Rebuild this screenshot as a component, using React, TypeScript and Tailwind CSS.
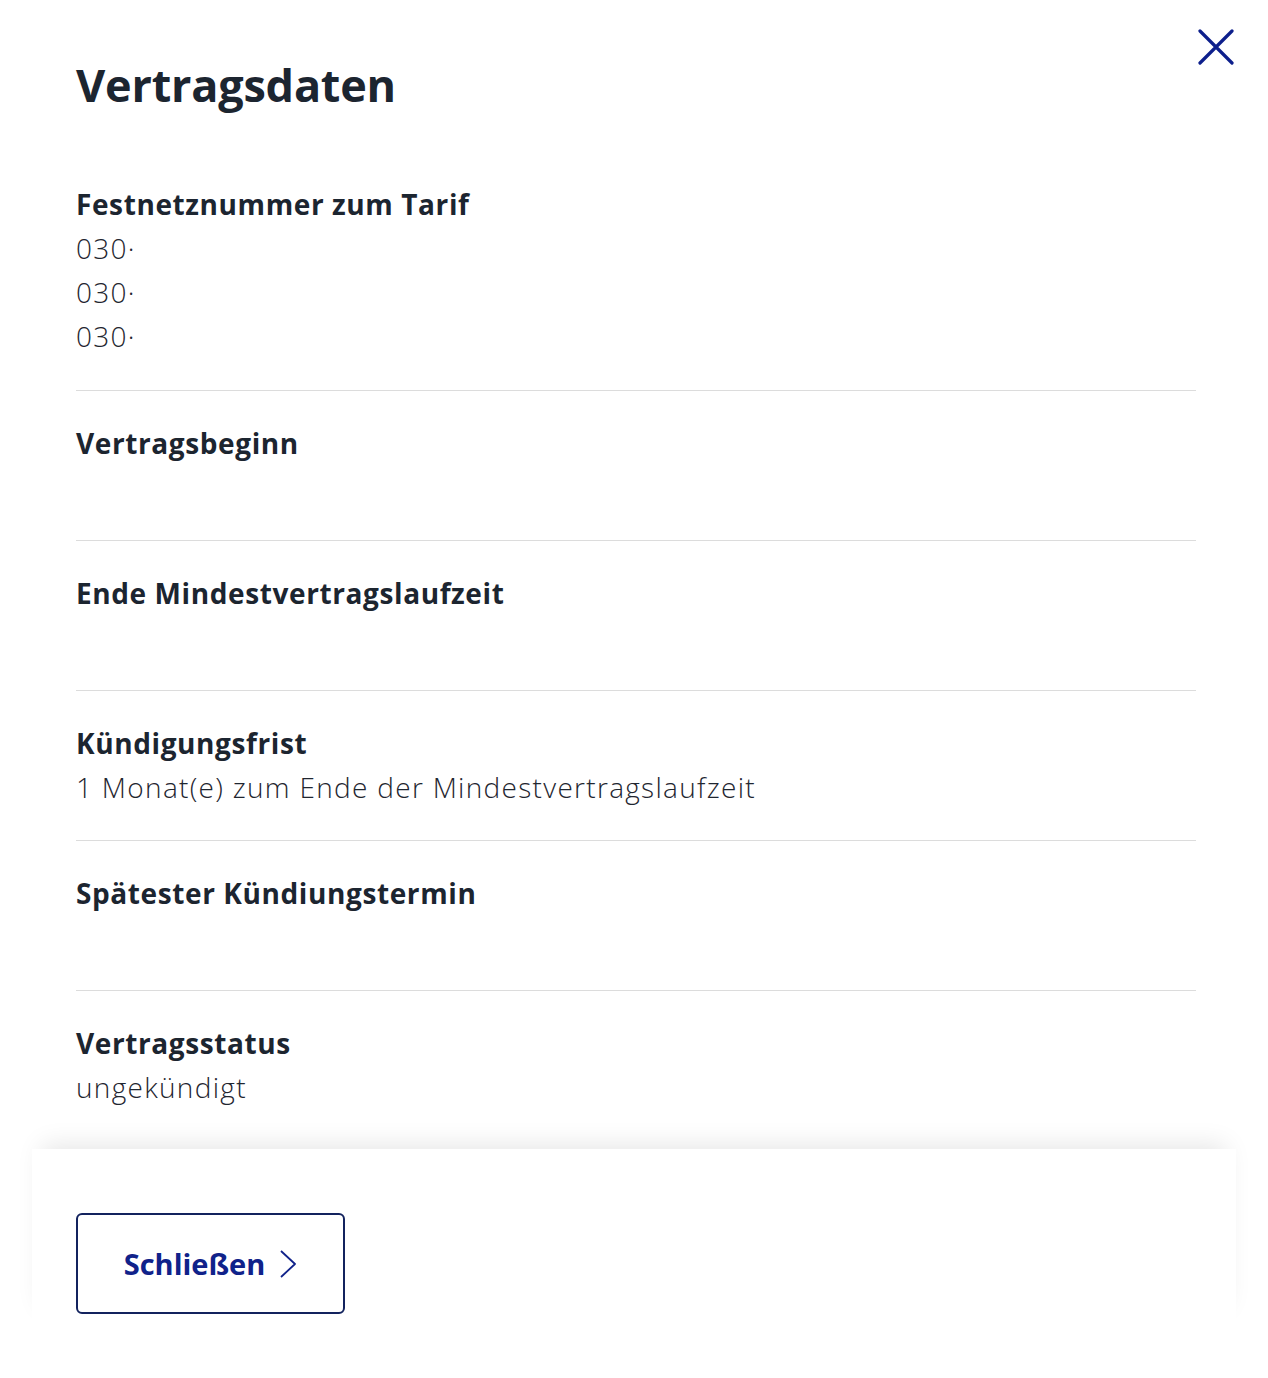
import React from "react";

type Row = { label: string; values: string[] };

const rows: Row[] = [
  { label: "Festnetznummer zum Tarif", values: ["030·", "030·", "030·"] },
  { label: "Vertragsbeginn", values: [""] },
  { label: "Ende Mindestvertragslaufzeit", values: [""] },
  { label: "Kündigungsfrist", values: ["1 Monat(e) zum Ende der Mindestvertragslaufzeit"] },
  { label: "Spätester Kündiungstermin", values: [""] },
  { label: "Vertragsstatus", values: ["ungekündigt"] },
];

const App: React.FC = () => {
  return (
    <div
      className="relative min-h-[1378px] bg-white text-[#1c2530]"
      style={{ fontFamily: '"Open Sans", "Noto Sans", sans-serif' }}
    >
      {/* close */}
      <button className="absolute right-[34px] top-[29px] w-[36px] h-[36px] flex items-center justify-center">
        <svg width="36" height="36" viewBox="0 0 36 36" fill="none">
          <path d="M2 2 L34 34 M34 2 L2 34" stroke="#0d1f8c" strokeWidth="3.2" strokeLinecap="round" />
        </svg>
      </button>

      {/* content */}
      <div className="px-[76px]">
        <h1 className="pt-[57px] mb-[38px] text-[45px] leading-[56px] font-bold tracking-[-0.2px]">
          Vertragsdaten
        </h1>

        <div className="w-[1120px]">
          {rows.map((row, i) => (
            <div
              key={row.label}
              className={
                i === 0
                  ? "pt-[31px] pb-[32px] border-b border-[#dcdcdc]"
                  : i < rows.length - 1
                  ? "pt-[30px] pb-[31px] border-b border-[#dcdcdc]"
                  : "pt-[30px] pb-[31px]"
              }
            >
              <div className="text-[28px] leading-[44px] font-bold tracking-[0.6px]">{row.label}</div>
              {row.values.map((v, j) => (
                <div key={j} className="text-[28px] leading-[44px] font-light tracking-[1.3px] h-[44px] text-[#1f2630]">
                  {v}
                </div>
              ))}
            </div>
          ))}
        </div>
      </div>

      {/* footer */}
      <div className="mx-8 mt-[9px] bg-white shadow-[0_-14px_24px_-10px_rgba(0,0,0,0.10)] pt-[64px] pb-[16px] px-[44px]">
        <button className="w-[269px] h-[101px] border-2 border-[#13235e] rounded-[6px] flex items-center justify-center gap-[14px] text-[#10228a]">
          <span className="text-[29px] font-bold leading-none">Schließen</span>
          <svg width="18" height="30" viewBox="0 0 18 30" fill="none">
            <path d="M2 2 L16 15 L2 28" stroke="#10228a" strokeWidth="1.8" strokeLinejoin="round" />
          </svg>
        </button>
      </div>
    </div>
  );
};

export default App;
